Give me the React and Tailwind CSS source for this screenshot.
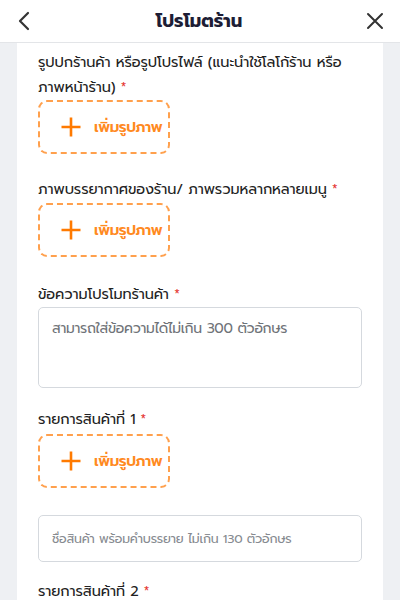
import React from 'react';

function Label({ children, className = '' }) {
  return (
    <p className={`text-[14.5px] leading-[25px] tracking-[-0.1px] text-[#222222] whitespace-nowrap ${className}`}>
      {children} <span className="text-[#e53935] text-[13px] align-top">*</span>
    </p>
  );
}

function UploadBox({ className = '' }) {
  return (
    <button
      type="button"
      className={`flex items-center w-[132px] h-[54px] rounded-[9px] border-2 border-dashed border-[#ffa04d] pl-[21px] gap-[13px] ${className}`}
    >
      <svg width="20" height="20" viewBox="0 0 20 20" fill="none">
        <path d="M10 0.5v19M0.5 10h19" stroke="#ff7a00" strokeWidth="2.6" />
      </svg>
      <span className="text-[15px] font-semibold tracking-[-0.45px] text-[#ff8a1f] whitespace-nowrap">เพิ่มรูปภาพ</span>
    </button>
  );
}

export default function App() {
  return (
    <div className="w-[400px] h-[600px] overflow-hidden flex flex-col bg-[#eef0f3] font-['Prompt','Noto_Sans_Thai',sans-serif]">
      {/* header */}
      <div className="h-[43px] shrink-0 bg-white border-b border-[#e3e5e8] flex items-center justify-between px-[16px]">
        <svg width="16" height="22" viewBox="0 0 16 22" fill="none">
          <path d="M12 3L4 11l8 8" stroke="#333" strokeWidth="2.2" strokeLinecap="round" strokeLinejoin="round" />
        </svg>
        <h1 className="text-[18px] font-bold text-[#1d1d35]">โปรโมตร้าน</h1>
        <svg width="18" height="18" viewBox="0 0 18 18" fill="none">
          <path d="M2 2l14 14M16 2L2 16" stroke="#333" strokeWidth="2" strokeLinecap="round" />
        </svg>
      </div>

      {/* form card */}
      <div className="flex-1 mx-[17px] bg-white px-[21px] pt-[7px]">
        <Label>
          รูปปกร้านค้า หรือรูปโปรไฟล์ (แนะนำใช้โลโก้ร้าน หรือ
          <br />
          ภาพหน้าร้าน)
        </Label>
        <UploadBox />

        <Label className="mt-[23px]">ภาพบรรยากาศของร้าน/ ภาพรวมหลากหลายเมนู</Label>
        <UploadBox className="mt-[1px]" />

        <Label className="mt-[25px]">ข้อความโปรโมทร้านค้า</Label>
        <textarea
          className="mt-0 block w-full h-[81px] rounded-[5px] border border-[#d5d9de] px-[13px] py-[10px] text-[14px] tracking-[-0.3px] text-[#333] placeholder:text-[#6f7378] resize-none"
          placeholder="สามารถใส่ข้อความได้ไม่เกิน 300 ตัวอักษร"
        />

        <Label className="mt-[19px]">รายการสินค้าที่ 1</Label>
        <UploadBox className="mt-[2px]" />

        <input
          className="mt-[27px] block w-full h-[47px] rounded-[5px] border border-[#d5d9de] px-[13px] text-[12.5px] tracking-[-0.2px] placeholder:text-[#868a90]"
          placeholder="ชื่อสินค้า พร้อมคำบรรยาย ไม่เกิน 130 ตัวอักษร"
        />

        <Label className="mt-[17px]">รายการสินค้าที่ 2</Label>
      </div>
    </div>
  );
}
